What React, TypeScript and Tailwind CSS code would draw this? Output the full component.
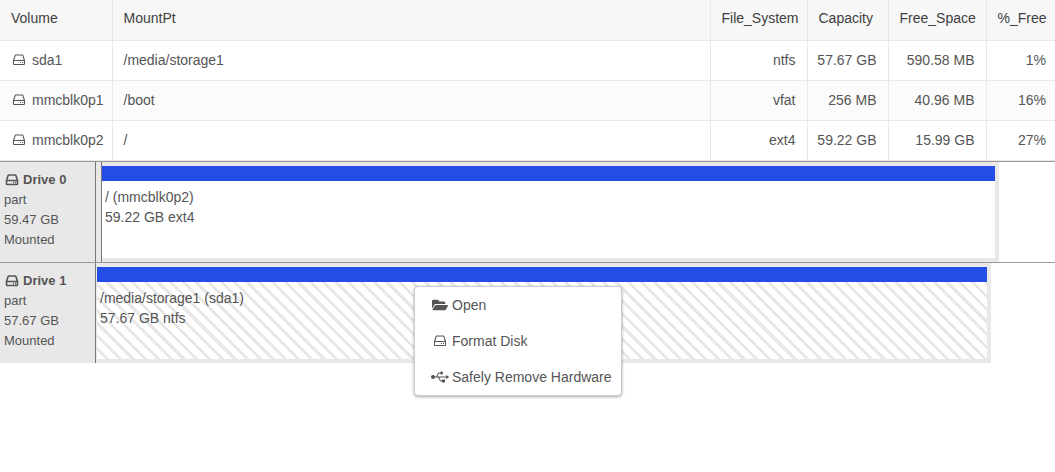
import type { ReactNode } from "react";
import { FaFolderOpen, FaUsb } from "react-icons/fa";
import clsx from "clsx";

interface Volume {
    name: string;
    mount: string;
    fs: string;
    capacity: string;
    free: string;
    percent: string;
}

interface DriveProps {
    name: string;
    size: string;
    label: string;
    detail: string;
    width: string;
    hasBootPart?: boolean;
    selected?: boolean;
}

const volumes: Volume[] = [
    { name: "sda1", mount: "/media/storage1", fs: "ntfs", capacity: "57.67 GB", free: "590.58 MB", percent: "1%" },
    { name: "mmcblk0p1", mount: "/boot", fs: "vfat", capacity: "256 MB", free: "40.96 MB", percent: "16%" },
    { name: "mmcblk0p2", mount: "/", fs: "ext4", capacity: "59.22 GB", free: "15.99 GB", percent: "27%" },
];

const columns = [
    { label: "Volume", width: "w-28" },
    { label: "MountPt", width: "w-auto" },
    { label: "File_System", width: "w-[97px]" },
    { label: "Capacity", width: "w-[81px]" },
    { label: "Free_Space", width: "w-[98px]" },
    { label: "%_Free", width: "w-[69px]" },
];

function HddIcon({ bold = false }: { bold?: boolean }) {
    return (
        <svg viewBox="0 0 14 12" className="h-3 w-3.5 shrink-0" fill="none" stroke="currentColor" strokeWidth={bold ? 1.6 : 1.1}>
            <path d="M1.5 6.5 L3.1 1.6 Q3.3 1 3.9 1 H10.1 Q10.7 1 10.9 1.6 L12.5 6.5 V9.7 Q12.5 10.5 11.7 10.5 H2.3 Q1.5 10.5 1.5 9.7 Z M1.5 6.5 H12.5" />
            <path d="M8 8.5 H9 M10 8.5 H11" />
        </svg>
    );
}

function VolumeTable() {
    return (
        <table className="w-full table-fixed border-collapse text-left">
            <thead>
                <tr className="h-10 border-b border-[#e8e8e8] bg-[#f7f7f7] text-[#404040]">
                    {columns.map(({ label, width }) => (
                        <th
                            key={label}
                            className={clsx("border-l border-[#e8e8e8] pb-1 pl-[11px] font-normal first:border-l-0", width)}
                        >
                            {label}
                        </th>
                    ))}
                </tr>
            </thead>
            <tbody>
                {volumes.map((v) => (
                    <tr key={v.name} className="h-10 border-b border-[#e8e8e8] whitespace-nowrap even:bg-[#fbfbfb]">
                        <td className="pl-3">
                            <span className="flex items-center gap-[6px]">
                                <HddIcon />
                                {v.name}
                            </span>
                        </td>
                        <td className="border-l border-[#e8e8e8] px-[11px]">{v.mount}</td>
                        <td className="border-l border-[#e8e8e8] pr-[11px] text-right">{v.fs}</td>
                        <td className="border-l border-[#e8e8e8] pr-[11px] text-right">{v.capacity}</td>
                        <td className="border-l border-[#e8e8e8] pr-[11px] text-right">{v.free}</td>
                        <td className="border-l border-[#e8e8e8] pr-[9px] text-right">{v.percent}</td>
                    </tr>
                ))}
            </tbody>
        </table>
    );
}

function Drive({ name, size, label, detail, width, hasBootPart, selected }: DriveProps) {
    return (
        <section className="flex border-t border-[#999]">
            <div className="w-24 shrink-0 border-r border-[#777] bg-[#e8e8e8] px-1 pt-2 pb-3 text-[13px]">
                <h2 className="flex items-center gap-1 pl-px font-bold">
                    <HddIcon bold />
                    {name}
                </h2>
                <p>part</p>
                <p>{size}</p>
                <p>Mounted</p>
            </div>
            <div className="min-w-0 flex-1">
                <div className="flex h-full bg-[#e8e8e8]" style={{ width }}>
                    {hasBootPart && <div className="w-[6px] shrink-0 border-r border-[#777]" />}
                    <div className={clsx("flex flex-1 flex-col py-1 pr-1", selected && "pl-px")}>
                        <div className="h-[15px] bg-[#234de4]" />
                        <div
                            className={clsx(
                                "flex-1 px-[3px] pt-[6px]",
                                selected
                                    ? "bg-[repeating-linear-gradient(45deg,#fff_0px,#fff_6px,#e8e8e8_6px,#e8e8e8_9px)]"
                                    : "bg-white"
                            )}
                        >
                            <p>{label}</p>
                            <p>{detail}</p>
                        </div>
                    </div>
                </div>
            </div>
        </section>
    );
}

function MenuItem({ icon, children }: { icon: ReactNode; children: ReactNode }) {
    return (
        <button type="button" className="flex h-9 w-full items-center gap-[3px] pr-[9px] pl-4 whitespace-nowrap">
            <span className="flex w-[18px] shrink-0 justify-center">{icon}</span>
            {children}
        </button>
    );
}

export default function App() {
    return (
        <main className="relative min-h-screen bg-white font-['Liberation_Sans',Arial,sans-serif] text-sm leading-5 text-[#555]">
            <VolumeTable />
            <Drive name="Drive 0" size="59.47 GB" label="/ (mmcblk0p2)" detail="59.22 GB ext4" width="94.2%" hasBootPart />
            <Drive name="Drive 1" size="57.67 GB" label="/media/storage1 (sda1)" detail="57.67 GB ntfs" width="93.3%" selected />

            <div className="absolute top-[286px] left-[414px] rounded border border-[#ccc] bg-white shadow-[0_1px_3px_rgba(0,0,0,0.35)]">
                <MenuItem icon={<FaFolderOpen className="size-4" />}>Open</MenuItem>
                <MenuItem icon={<HddIcon />}>Format Disk</MenuItem>
                <MenuItem icon={<FaUsb className="size-[18px]" />}>Safely Remove Hardware</MenuItem>
            </div>
        </main>
    );
}
